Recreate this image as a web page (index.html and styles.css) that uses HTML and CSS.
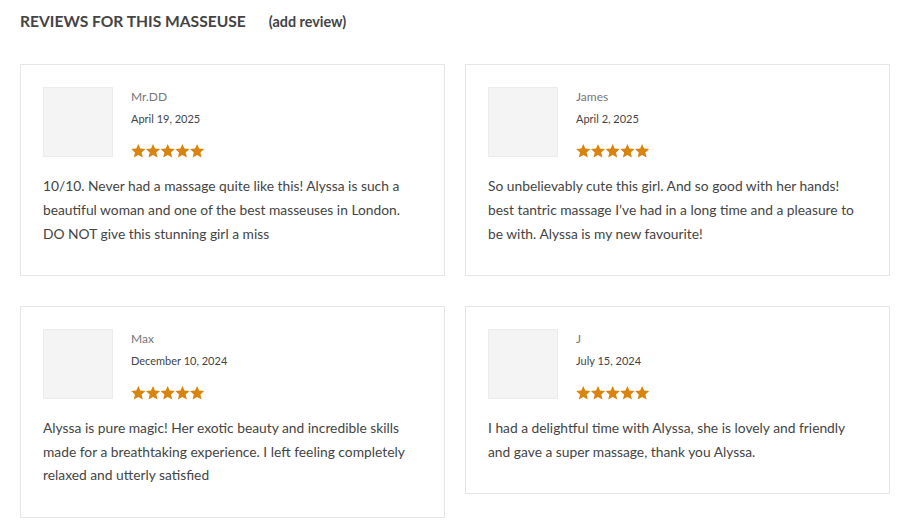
FILE: index.html
```html
<!DOCTYPE html>
<html>
<head>
<meta charset="utf-8">
<link rel="stylesheet" href="styles.css">
</head>
<body>
<div class="reviews">
  <div class="reviews-head">
    <h2 class="title">REVIEWS FOR THIS MASSEUSE</h2>
    <a class="add">(add review)</a>
  </div>
  <div class="grid">
    <div class="card">
      <div class="top">
        <div class="avatar"></div>
        <div class="meta">
          <div class="name">Mr.DD</div>
          <div class="date">April 19, 2025</div>
          <svg class="stars" viewBox="0 0 74 14" width="74" height="14"><defs><path id="s" d="M7.3 0 L9.3 4.6 L14.4 5 L10.6 8.4 L11.8 13.6 L7.3 10.9 L2.8 13.6 L4 8.4 L0.2 5 L5.3 4.6 Z"/></defs><use href="#s" x="0"/><use href="#s" x="14.7"/><use href="#s" x="29.4"/><use href="#s" x="44.1"/><use href="#s" x="58.8"/></svg>
        </div>
      </div>
      <p class="text">10/10. Never had a massage quite like this! Alyssa is such a beautiful woman and one of the best masseuses in London. DO NOT give this stunning girl a miss</p>
    </div>
    <div class="card">
      <div class="top">
        <div class="avatar"></div>
        <div class="meta">
          <div class="name">James</div>
          <div class="date">April 2, 2025</div>
          <svg class="stars" viewBox="0 0 74 14" width="74" height="14"><use href="#s" x="0"/><use href="#s" x="14.7"/><use href="#s" x="29.4"/><use href="#s" x="44.1"/><use href="#s" x="58.8"/></svg>
        </div>
      </div>
      <p class="text">So unbelievably cute this girl. And so good with her hands! best tantric massage I’ve had in a long time and a pleasure to be with. Alyssa is my new favourite!</p>
    </div>
    <div class="card">
      <div class="top">
        <div class="avatar"></div>
        <div class="meta">
          <div class="name">Max</div>
          <div class="date">December 10, 2024</div>
          <svg class="stars" viewBox="0 0 74 14" width="74" height="14"><use href="#s" x="0"/><use href="#s" x="14.7"/><use href="#s" x="29.4"/><use href="#s" x="44.1"/><use href="#s" x="58.8"/></svg>
        </div>
      </div>
      <p class="text">Alyssa is pure magic! Her exotic beauty and incredible skills made for a breathtaking experience. I left feeling completely relaxed and utterly satisfied</p>
    </div>
    <div class="card">
      <div class="top">
        <div class="avatar"></div>
        <div class="meta">
          <div class="name">J</div>
          <div class="date">July 15, 2024</div>
          <svg class="stars" viewBox="0 0 74 14" width="74" height="14"><use href="#s" x="0"/><use href="#s" x="14.7"/><use href="#s" x="29.4"/><use href="#s" x="44.1"/><use href="#s" x="58.8"/></svg>
        </div>
      </div>
      <p class="text">I had a delightful time with Alyssa, she is lovely and friendly and gave a super massage, thank you Alyssa.</p>
    </div>
  </div>
</div>
</body>
</html>
```
FILE: styles.css
```css
* { box-sizing: border-box; }
body {
  margin: 0;
  background: #fff;
  font-family: Lato, "Open Sans", sans-serif;
  color: #444;
}
.reviews {
  padding: 12px 20px 0 20px;
  width: 910px;
}
.reviews-head {
  display: flex;
  align-items: baseline;
  gap: 23px;
  height: 52px;
}
.title {
  margin: 0;
  font-size: 15.6px;
  font-weight: 700;
  color: #444;
  letter-spacing: 0;
}
.add {
  font-size: 14.4px;
  font-weight: 700;
  color: #444;
}
.grid {
  display: grid;
  grid-template-columns: 425px 425px;
  column-gap: 20px;
  row-gap: 30px;
  align-items: start;
  width: 870px;
}
.card {
  border: 1px solid #e6e6e6;
  padding: 22px 22px 22.5px 22px;
}
.top {
  display: flex;
  gap: 18px;
}
.avatar {
  width: 70px;
  height: 70px;
  background: #f4f4f4;
  border: 1px solid #ececec;
  flex: none;
}
.meta {
  display: flex;
  flex-direction: column;
  padding-top: 1px;
}
.name {
  font-size: 12px;
  color: #777;
  line-height: 17px;
}
.date {
  font-size: 11px;
  color: #444;
  line-height: 16px;
  margin-top: 6px;
}
.stars {
  fill: #d9840f;
  margin-top: 17px;
  display: block;
}
.text {
  margin: 16px 0 0 0;
  font-size: 13.8px;
  line-height: 23.75px;
  color: #444;
  padding-bottom: 7px;
}
```
